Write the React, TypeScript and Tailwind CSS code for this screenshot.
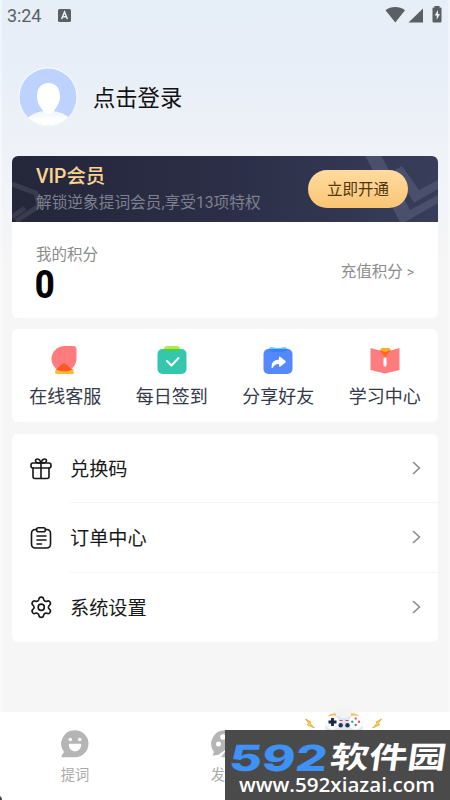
import React from 'react';
import { Settings } from 'lucide-react';

const cjk = "font-['Roboto','Noto_Sans_CJK_SC',sans-serif]";

function StatusBar() {
  return (
    <header className="flex h-8 items-center pl-[7px] pr-[8px] text-[#5b5f64]">
      <span className="w-[36px] text-[18px] leading-8 tracking-[-0.1px]">3:24</span>
      <svg className="ml-[15px] -mt-[2px]" width="13" height="13" viewBox="0 0 13 13">
        <rect width="13" height="13" rx="1.5" fill="#5b5f63" />
        <path d="M3.6 10 6.5 3l2.9 7M4.8 7.8h3.4" fill="none" stroke="#edf2f7" strokeWidth="1.5" />
      </svg>
      <svg className="ml-auto -mt-[2px]" width="57" height="18" viewBox="0 0 57 18" fill="#5b5f63">
        <path d="M.5 4.2C6-.2 14.500-.2 20 4.200L10.300 16.500Z" />
        <path d="M38 2.500V16.500H23.500Z" />
        <path d="M49.500 0h5v1.500h1q1 0 1 1v13q0 1-1 1h-7q-1 0-1-1v-13q0-1 1-1h1Z" />
        <path d="M53 4 49.700 9.500h2v4.300L55 8h-2Z" fill="#edf2f7" />
      </svg>
    </header>
  );
}

function Avatar() {
  return (
    <svg width="60" height="60" viewBox="0 0 60 60">
      <defs>
        <clipPath id="avatarClip"><circle cx="30" cy="30" r="28.500" /></clipPath>
        <linearGradient id="avatarBody" x2="0" y2="1"><stop stopColor="#eef3fd" /><stop offset=".6" stopColor="#fff" /></linearGradient>
      </defs>
      <circle cx="30" cy="30" r="29.500" fill="#f8fbff" />
      <g clipPath="url(#avatarClip)">
        <rect width="60" height="60" fill="#bdd2ff" />
        <path d="M9 51q8-6 17-7h9q9 1 17 7v9H9Z" fill="url(#avatarBody)" />
        <path d="M30.500 16C37.500 16 42 21 42 29c0 6-2.500 10-5.500 14q-1.500 4-6 4t-6-4C21.500 39 19 35 19 29c0-8 4.500-13 11.500-13Z" fill="#fff" />
      </g>
    </svg>
  );
}

function VipCard() {
  return (
    <section className="h-[162px] overflow-hidden rounded-md bg-white">
      <div className="relative flex h-[66px] items-center justify-between bg-linear-to-r from-[#24273a] via-[#2b2e46] to-[#383e5a] pl-6 pr-[30px]">
        <svg className="absolute inset-0" width="426" height="66" viewBox="0 0 426 66" fill="none">
          <path d="M0 28 24 37 27 50 4 65M0 61 13 52" stroke="#393c4e" strokeWidth="5" />
          <path d="M347 -12H363L398 54 426 39V47L393 66H388ZM383 14 390 10 407 34 426 24V33L402 46.700Z" fill="#4a506b" />
        </svg>
        <div className="relative flex flex-col pt-[2px]">
          <h2 className="h-[27px] text-[19.400px] font-medium leading-[27px] text-[#f8d391]">VIP会员</h2>
          <p className="h-[27px] whitespace-nowrap text-[15.700px] leading-[26px] text-[#7e8090]">解锁逆象提词会员,享受13项特权</p>
        </div>
        <button className="relative h-[38px] w-[100px] rounded-full bg-linear-to-b from-[#ffdb9e] to-[#f9c574] pt-[2px] text-[15.500px] leading-[36px] text-[#50370f]">立即开通</button>
      </div>
      <div className="flex h-[96px] items-center justify-between pl-6 pr-6">
        <div className="flex flex-col pt-[6px]">
          <span className="text-[15.500px] leading-[22px] text-[#8c8c8c]">我的积分</span>
          <svg className="overflow-visible" width="20" height="36" viewBox="0 0 20 36"><text x="-1.200" y="32" fontSize="38" fontWeight="800" textLength="20" lengthAdjust="spacingAndGlyphs" fill="#000" fontFamily="Roboto, sans-serif">0</text></svg>
        </div>
        <button className="flex gap-[4px] pt-[3px] text-[15.500px] leading-6 text-[#8c8c8c]"><span>充值积分</span><span className="text-[14px]">&gt;</span></button>
      </div>
    </section>
  );
}

const shortcuts = [
  { name: '在线客服', icon: <><path d="M6 26h17l1 4q0 1-2 1H7q-2 0-2-2Z" fill="#ffb83c"/><path d="M15 3h8q3.500 0 3.500 3.500V15C26.500 23 21 28 14 28S1.500 23 1.500 16 7 3 15 3Z" fill="#ff7b7d"/><path d="M6 26.500 13 20.500q1-.8 2 0l7.500 6q-8 4-16.500 0" fill="#ff5a24"/></> },
  { name: '每日签到', icon: <><path d="M7 6q0-3 3-3h10q3 0 3 3v3H7Z" fill="#b8e64b"/><rect x=".5" y="6" width="29" height="25" rx="5" fill="#34c7ae"/><path d="M7 6h16v1q0 2-2 2H9q-2 0-2-2Z" fill="#43cf68"/><path d="m10 18 4.500 4.500 7-7.500" fill="none" stroke="#fff" strokeWidth="2" strokeLinecap="round" strokeLinejoin="round"/></> },
  { name: '分享好友', icon: <><path d="M5 7q1-3 4-3 6 2 12 0 3 0 4 3v3H6Z" fill="#65ceff"/><rect x=".5" y="6" width="29" height="25" rx="5" fill="#5588fb"/><path d="M5 6h20q-2 3-5 3h-9Q7 9 5 6" fill="#3b7eff"/><path d="M16 14q.5-.8 1.500 0l5 4q.8.8 0 1.500l-5 4q-1.500 1-1.500-1V21q-4.500-.2-6 3.500-.8 1-1.500 0Q8 17 16 16.500Z" fill="#fff"/></> },
  { name: '学习中心', icon: <><path d="M.5 5 15 9l14.500-4V27L15 30.500.5 27Z" fill="#ff7c7e"/><path d="M10 7q1-3 5-2 5-1 6 2l-6 6Z" fill="#ffad25"/><path d="m9 7 6 2 6-2-6 7Z" fill="#ff6529"/><path d="M15 16v6" stroke="#fff" strokeWidth="3" strokeLinecap="round"/></> },
];

function GiftIcon() {
  return <svg width="22" height="22" viewBox="0 0 22 22"><rect x="1" y="5" width="20" height="5" rx="2" /><path d="M3 10V18.500q0 2 2 2h12q2 0 2-2V10M11 5V20.500M11 5C8 5 5.500 4.500 5.500 2.700 5.500.5 9.500-.5 11 5Zm0 0c3 0 5.500-.5 5.500-2.300C16.500.5 12.500-.5 11 5Z" /></svg>;
}

function OrdersIcon() {
  return <svg width="22" height="22" viewBox="0 0 22 22"><path d="M6.500 2.500H5.500Q1.500 2.500 1.500 6.500V17q0 4 4 4h11q4 0 4-4V6.500q0-4-4-4h-1" /><path d="M8.500.8h5q2 0 2 2t-2 2h-5q-2 0-2-2t2-2ZM7 9h9M7 13h9M7 17h4.500" /></svg>;
}

function SettingsIcon() {
  return <Settings size={24.500} strokeWidth={1.6} className="-mx-[1.25px] shrink-0" />;
}

const menu = [
  { name: '兑换码', icon: <GiftIcon /> },
  { name: '订单中心', icon: <OrdersIcon /> },
  { name: '系统设置', icon: <SettingsIcon /> },
];

function Controller() {
  return (
    <svg className="absolute -top-[22px] left-[76px]" width="86" height="22" viewBox="0 0 86 22">
      <circle cx="43" cy="19" r="19" fill="#f3f3f4" />
      <path d="M28 8q3-2 7-1.500M50 6.500q4-.5 7 1.500" fill="none" stroke="#f4be43" strokeWidth="2" />
      <path d="M25 22q-1-14 10-14 3 0 6 2h5q3-2 6-2 11 0 9 14Z" fill="#dfe4ef" />
      <circle cx="31.500" cy="14.500" r="7" fill="#f9fbff" /><circle cx="54.700" cy="14.500" r="7" fill="#fff" />
      <path d="M31.500 10v8M27.500 14h8" stroke="#17283f" strokeWidth="2.800" />
      <circle cx="54.700" cy="10.500" r="1.200" fill="#f36270" /><circle cx="54.700" cy="17" r="1.200" fill="#419866" /><circle cx="51.300" cy="13.800" r="1.200" fill="#26a9bb" /><circle cx="58" cy="13.800" r="1.200" fill="#e85376" />
      <circle cx="39.700" cy="17.300" r="2.200" fill="#28384c" /><circle cx="46.500" cy="17.300" r="2.200" fill="#28384c" /><path d="M38.500 12.500h3m3 0h3" stroke="#c64c66" strokeWidth="1.200" />
      <path d="m4.500 11 5.500 3-.8 1.500L13.500 20 6.500 17l1-1.800ZM80.500 11 75 14l.8 1.500L71.500 20l7-3-1-1.800Z" fill="#ffd436" stroke="#ca9e43" strokeWidth=".7" />
    </svg>
  );
}

export default function App() {
  return (
    <div className={`relative flex h-[800px] w-[450px] flex-col overflow-hidden bg-[#f6f6f6] ${cjk}`}>
      <div className="flex h-[156px] flex-col bg-linear-to-b from-[#e6eef8] via-[#e9eff8] to-[#eff2f7]">
        <StatusBar />
        <div className="mt-[35px] flex items-center gap-[15px] pl-[18px]">
          <Avatar />
          <h1 className="pt-[2px] text-[22.300px] leading-8 text-[#111]">点击登录</h1>
        </div>
      </div>
      <main className="flex h-[556px] flex-col bg-linear-to-b from-[#eff2f8] via-[#f6f6f6] via-20% to-[#f6f6f6] pl-3 pr-3">
        <VipCard />
        <section className="mt-[11px] flex h-[93px] rounded-md bg-white">
          {shortcuts.map((item) => (
            <div key={item.name} className="flex flex-1 flex-col items-center pt-[14px]">
              <svg width="30" height="34" viewBox="0 0 30 34">{item.icon}</svg>
              <span className="mt-[7px] whitespace-nowrap text-[18px] leading-[26px] text-[#34384a]">{item.name}</span>
            </div>
          ))}
        </section>
        <section className="mt-[12px] flex h-[208px] flex-col rounded-md bg-white">
          {menu.map((item, i) => (
            <div key={item.name} className="flex flex-1 items-center pl-[18px] text-[#171717] [&_svg]:fill-none [&_svg]:stroke-[1.6px] [&_svg]:[stroke-linecap:round] [&_svg]:[stroke-linejoin:round]">
              <div className="flex w-[22px] justify-center [&_svg]:overflow-visible [&_svg]:stroke-current">{item.icon}</div>
              <div className={`ml-[18px] flex h-full flex-1 items-center justify-between pr-[17px] ${i < 2 ? 'border-b border-[#f5f5f5]' : ''}`}>
                <span className="pt-[3px] text-[19.200px] leading-7 text-[#191919]">{item.name}</span>
                <svg width="9" height="14" viewBox="0 0 9 14" stroke="#888"><path d="m1.500 1.500 6 5.500-6 5.500" /></svg>
              </div>
            </div>
          ))}
        </section>
      </main>
      <nav className="flex h-[88px] bg-white text-[#aaa]">
        <div className="flex w-[150px] flex-col items-center pt-[18px]">
          <svg width="28" height="28" viewBox="0 0 28 28"><path d="M14 .3A13.500 13.500 0 1 1 14 27.300H1.500Q-.2 27 .8 25.500L3 22A13.500 13.500 0 0 1 14 .3Z" fill="#b5b5b5" /><circle cx="9.300" cy="9.500" r="1.800" fill="#fff" /><circle cx="18.700" cy="9.500" r="1.800" fill="#fff" /><path d="M9 13.700h10q1.200 0 1.200 1.200c-.3 3.800-2.800 6.300-6.200 6.300s-5.900-2.500-6.200-6.300q0-1.200 1.200-1.200Z" fill="#fff" /></svg>
          <span className="mt-[7px] text-[14.300px] leading-5">提词</span>
        </div>
        <div className="flex w-[150px] flex-col items-center pt-[18px]">
          <svg width="28" height="28" viewBox="0 0 28 28"><path d="M14 .3A13.500 13.500 0 1 1 14 27.300H10L17 18 7 25 1.500 25.500 3 22A13.500 13.500 0 0 1 14 .3Z" fill="#b5b5b5" /><g fill="#fff"><circle cx="12" cy="7" r="2.800" /><circle cx="7.500" cy="14" r="2.500" /></g></svg>
          <span className="mt-[7px] text-[14.300px] leading-5">发现</span>
        </div>
      </nav>
      <div className="pointer-events-none absolute inset-0 border-x-2 border-white/40" />
      <svg className="absolute bottom-0 left-0" width="2" height="4"><path d="M0 0q2 1 2 4H0Z" fill="#444" /></svg>
      <aside className="absolute bottom-0 right-0 h-[70px] w-[225px] bg-[#4a4a4a]">
        <Controller />
        <svg width="225" height="70" viewBox="0 0 225 70">
          <text transform="translate(3 41) skewX(-7)" fontFamily="Inter, sans-serif" fontSize="36" fontWeight="800" fill="#3e91f5" textLength="98" lengthAdjust="spacingAndGlyphs">592</text>
          <text transform="translate(104 38) skewX(-8)" fontFamily="Noto Sans CJK SC, sans-serif" fontSize="30" fontWeight="700" fill="#fff" textLength="116" lengthAdjust="spacingAndGlyphs">软件园</text>
          <text x="14" y="62" fontFamily="Open Sans, sans-serif" fontSize="20.500" fontWeight="600" fill="#fff" textLength="196" lengthAdjust="spacingAndGlyphs">www.592xiazai.com</text>
        </svg>
      </aside>
    </div>
  );
}
